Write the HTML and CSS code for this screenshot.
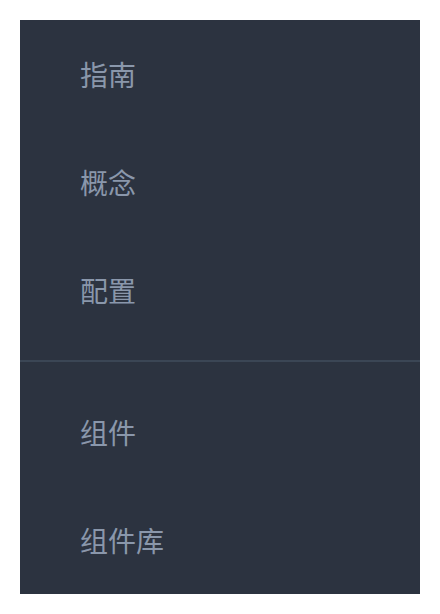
FILE: index.html
```html
<!DOCTYPE html>
<html lang="zh-CN">
<head>
<meta charset="utf-8">
<title>菜单</title>
<link rel="stylesheet" href="styles.css">
</head>
<body>
<nav class="menu">
  <ul class="group group-first">
    <li class="item">指南</li>
    <li class="item">概念</li>
    <li class="item">配置</li>
  </ul>
  <ul class="group group-second">
    <li class="item">组件</li>
    <li class="item">组件库</li>
  </ul>
</nav>
</body>
</html>
```
FILE: styles.css
```css
html, body {
  margin: 0;
  padding: 0;
  background: #ffffff;
}
body {
  padding: 20px;
  font-family: "Noto Sans CJK SC", "Noto Sans", sans-serif;
}
.menu {
  width: 400px;
  background: #2c3340;
}
.group {
  list-style: none;
  margin: 0;
  padding: 0;
}
.group-first {
  padding-bottom: 16px;
}
.group-second {
  border-top: 2px solid #3b4655;
  padding-top: 16px;
}
.item {
  height: 108px;
  display: flex;
  align-items: center;
  padding-left: 60px;
  font-size: 28px;
  color: #8a97ab;
}
```
